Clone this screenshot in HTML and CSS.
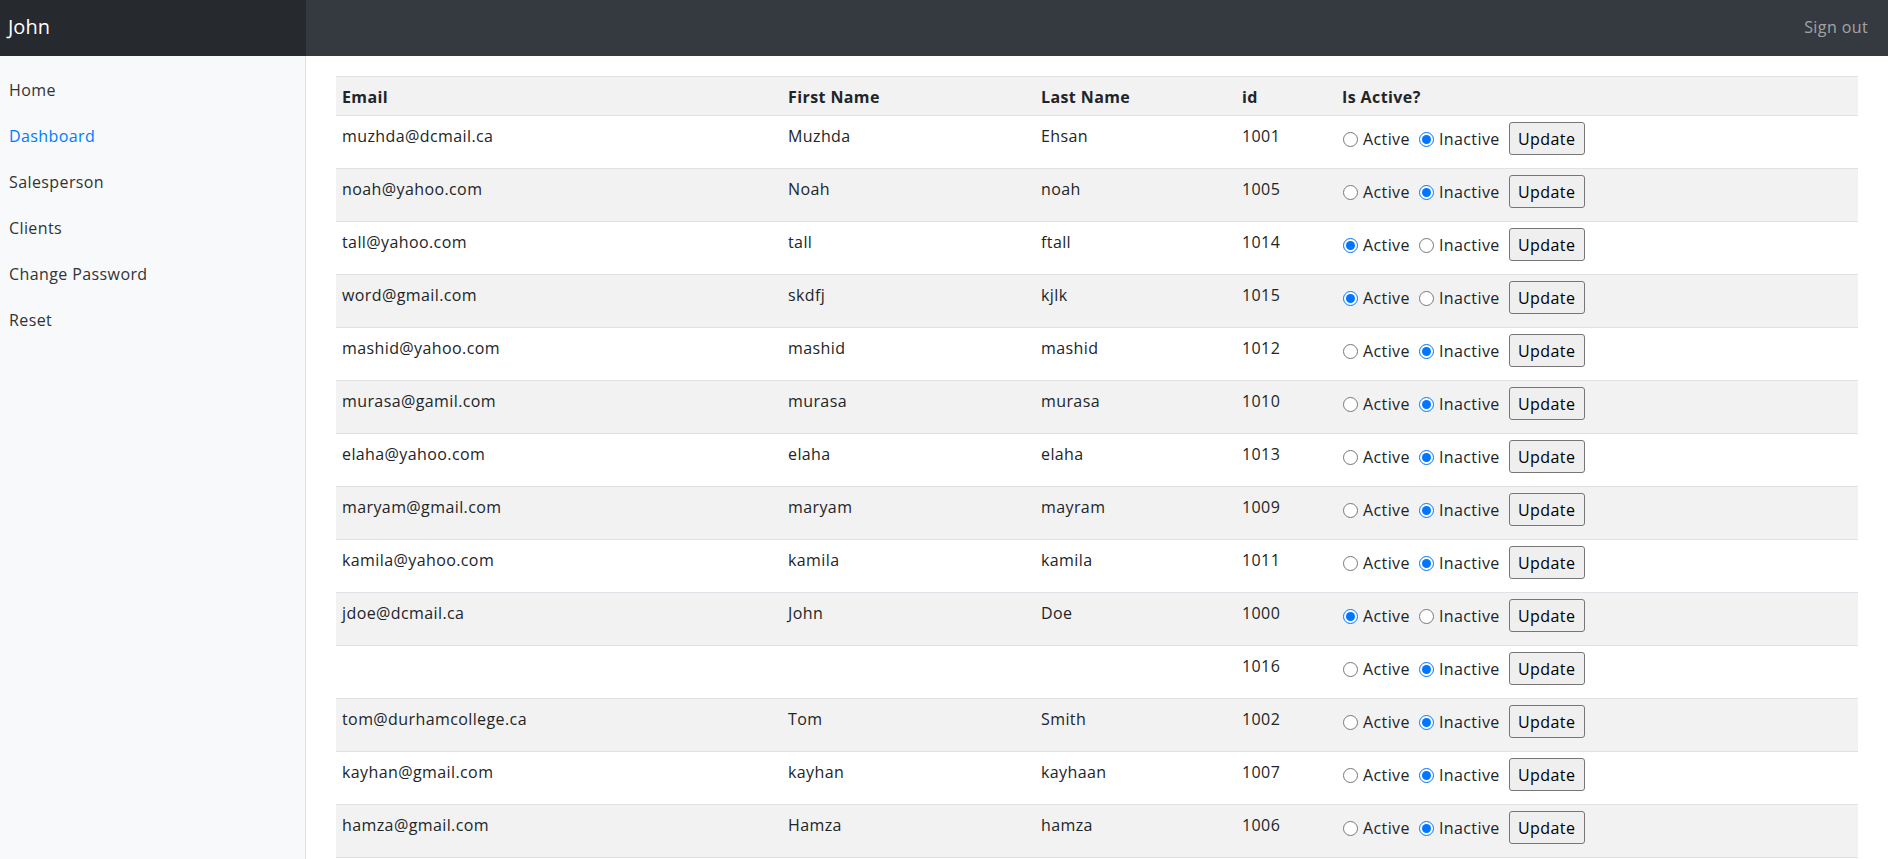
FILE: index.html
```html
<!DOCTYPE html>
<html lang="en">
<head>
<meta charset="utf-8">
<title>Dashboard</title>
<link rel="stylesheet" href="styles.css">
</head>
<body>
<header class="topbar">
  <a class="brand" href="#">John</a>
  <a class="signout" href="#">Sign out</a>
</header>
<div class="layout">
  <nav class="sidebar">
    <ul class="nav">
      <li><a class="nav-link" href="#">Home</a></li>
      <li><a class="nav-link active" href="#">Dashboard</a></li>
      <li><a class="nav-link" href="#">Salesperson</a></li>
      <li><a class="nav-link" href="#">Clients</a></li>
      <li><a class="nav-link" href="#">Change Password</a></li>
      <li><a class="nav-link" href="#">Reset</a></li>
    </ul>
  </nav>
  <main class="content">
    <table class="users">
      <colgroup>
        <col class="c-email"><col class="c-first"><col class="c-last"><col class="c-id"><col>
      </colgroup>
      <thead>
        <tr><th>Email</th><th>First Name</th><th>Last Name</th><th>id</th><th>Is Active?</th></tr>
      </thead>
      <tbody>
        <tr><td>muzhda@dcmail.ca</td><td>Muzhda</td><td>Ehsan</td><td>1001</td>
          <td class="status"><form class="status-form"><label class="opt"><input type="radio" name="s1001"> Active</label><label class="opt"><input type="radio" name="s1001" checked> Inactive</label><button type="button" class="btn">Update</button></form></td></tr>
        <tr><td>noah@yahoo.com</td><td>Noah</td><td>noah</td><td>1005</td>
          <td class="status"><form class="status-form"><label class="opt"><input type="radio" name="s1005"> Active</label><label class="opt"><input type="radio" name="s1005" checked> Inactive</label><button type="button" class="btn">Update</button></form></td></tr>
        <tr><td>tall@yahoo.com</td><td>tall</td><td>ftall</td><td>1014</td>
          <td class="status"><form class="status-form"><label class="opt"><input type="radio" name="s1014" checked> Active</label><label class="opt"><input type="radio" name="s1014"> Inactive</label><button type="button" class="btn">Update</button></form></td></tr>
        <tr><td>word@gmail.com</td><td>skdfj</td><td>kjlk</td><td>1015</td>
          <td class="status"><form class="status-form"><label class="opt"><input type="radio" name="s1015" checked> Active</label><label class="opt"><input type="radio" name="s1015"> Inactive</label><button type="button" class="btn">Update</button></form></td></tr>
        <tr><td>mashid@yahoo.com</td><td>mashid</td><td>mashid</td><td>1012</td>
          <td class="status"><form class="status-form"><label class="opt"><input type="radio" name="s1012"> Active</label><label class="opt"><input type="radio" name="s1012" checked> Inactive</label><button type="button" class="btn">Update</button></form></td></tr>
        <tr><td>murasa@gamil.com</td><td>murasa</td><td>murasa</td><td>1010</td>
          <td class="status"><form class="status-form"><label class="opt"><input type="radio" name="s1010"> Active</label><label class="opt"><input type="radio" name="s1010" checked> Inactive</label><button type="button" class="btn">Update</button></form></td></tr>
        <tr><td>elaha@yahoo.com</td><td>elaha</td><td>elaha</td><td>1013</td>
          <td class="status"><form class="status-form"><label class="opt"><input type="radio" name="s1013"> Active</label><label class="opt"><input type="radio" name="s1013" checked> Inactive</label><button type="button" class="btn">Update</button></form></td></tr>
        <tr><td>maryam@gmail.com</td><td>maryam</td><td>mayram</td><td>1009</td>
          <td class="status"><form class="status-form"><label class="opt"><input type="radio" name="s1009"> Active</label><label class="opt"><input type="radio" name="s1009" checked> Inactive</label><button type="button" class="btn">Update</button></form></td></tr>
        <tr><td>kamila@yahoo.com</td><td>kamila</td><td>kamila</td><td>1011</td>
          <td class="status"><form class="status-form"><label class="opt"><input type="radio" name="s1011"> Active</label><label class="opt"><input type="radio" name="s1011" checked> Inactive</label><button type="button" class="btn">Update</button></form></td></tr>
        <tr><td>jdoe@dcmail.ca</td><td>John</td><td>Doe</td><td>1000</td>
          <td class="status"><form class="status-form"><label class="opt"><input type="radio" name="s1000" checked> Active</label><label class="opt"><input type="radio" name="s1000"> Inactive</label><button type="button" class="btn">Update</button></form></td></tr>
        <tr><td></td><td></td><td></td><td>1016</td>
          <td class="status"><form class="status-form"><label class="opt"><input type="radio" name="s1016"> Active</label><label class="opt"><input type="radio" name="s1016" checked> Inactive</label><button type="button" class="btn">Update</button></form></td></tr>
        <tr><td>tom@durhamcollege.ca</td><td>Tom</td><td>Smith</td><td>1002</td>
          <td class="status"><form class="status-form"><label class="opt"><input type="radio" name="s1002"> Active</label><label class="opt"><input type="radio" name="s1002" checked> Inactive</label><button type="button" class="btn">Update</button></form></td></tr>
        <tr><td>kayhan@gmail.com</td><td>kayhan</td><td>kayhaan</td><td>1007</td>
          <td class="status"><form class="status-form"><label class="opt"><input type="radio" name="s1007"> Active</label><label class="opt"><input type="radio" name="s1007" checked> Inactive</label><button type="button" class="btn">Update</button></form></td></tr>
        <tr><td>hamza@gmail.com</td><td>Hamza</td><td>hamza</td><td>1006</td>
          <td class="status"><form class="status-form"><label class="opt"><input type="radio" name="s1006"> Active</label><label class="opt"><input type="radio" name="s1006" checked> Inactive</label><button type="button" class="btn">Update</button></form></td></tr>
      </tbody>
    </table>
  </main>
</div>
</body>
</html>
```
FILE: styles.css
```css
* { box-sizing: border-box; }

html, body { height: 100%; }

body {
  margin: 0;
  font-family: "Open Sans", "Noto Sans", sans-serif;
  font-size: 16px;
  line-height: 1.5;
  letter-spacing: 0.4px;
  color: #212529;
  background: #fff;
  overflow: hidden;
}

a { text-decoration: none; }

.topbar {
  display: flex;
  height: 56px;
  background: #343a40;
}

.brand {
  width: 306px;
  flex: none;
  display: flex;
  align-items: center;
  padding: 0 0 2px 8px;
  background: #26292e;
  color: #fff;
  font-size: 20px;
  line-height: 30px;
  letter-spacing: 0;
}

.signout {
  margin-left: auto;
  display: flex;
  align-items: center;
  padding: 0 20px 2px 0;
  color: rgba(255, 255, 255, 0.55);
}

.layout {
  display: flex;
  height: calc(100% - 56px);
}

.sidebar {
  width: 306px;
  flex: none;
  background: #f8f9fa;
  box-shadow: inset -1px 0 0 rgba(0, 0, 0, 0.1);
  padding-top: 11px;
}

.nav {
  list-style: none;
  margin: 0;
  padding: 0;
}

.nav-link {
  display: block;
  padding: 11px 9px;
  color: #333;
}

.nav-link.active { color: #007bff; }

.content {
  flex: 1;
  min-width: 0;
  padding: 20px 30px 0;
}

.users {
  width: 100%;
  border-collapse: collapse;
  table-layout: fixed;
  border-bottom: 1px solid #dee2e6;
}

.c-email { width: 446px; }
.c-first { width: 253px; }
.c-last { width: 201px; }
.c-id { width: 100px; }

.users th,
.users td {
  border-top: 1px solid #dee2e6;
  text-align: left;
  vertical-align: top;
}

.users th {
  padding: 8px 6px 6px;
  font-weight: 700;
  background: #f2f2f2;
}

.users td {
  padding: 8px 6px 0;
}

.users tbody tr:nth-child(even) { background: #f2f2f2; }

.users td.status {
  padding: 6px 6px 13px;
}

.status-form {
  display: flex;
  align-items: center;
  height: 33px;
  margin: 0;
  padding-left: 1px;
}

.opt {
  display: flex;
  align-items: center;
  gap: 5px;
  margin-right: 9px;
  padding-top: 1px;
}

.opt input {
  width: 15px;
  height: 15px;
  margin: 0;
}

.btn {
  width: 76px;
  height: 33px;
  padding: 0;
  font: inherit;
  letter-spacing: 0.4px;
  color: #000;
  background: #efefef;
  border: 1px solid #767676;
  border-radius: 3px;
}
```
